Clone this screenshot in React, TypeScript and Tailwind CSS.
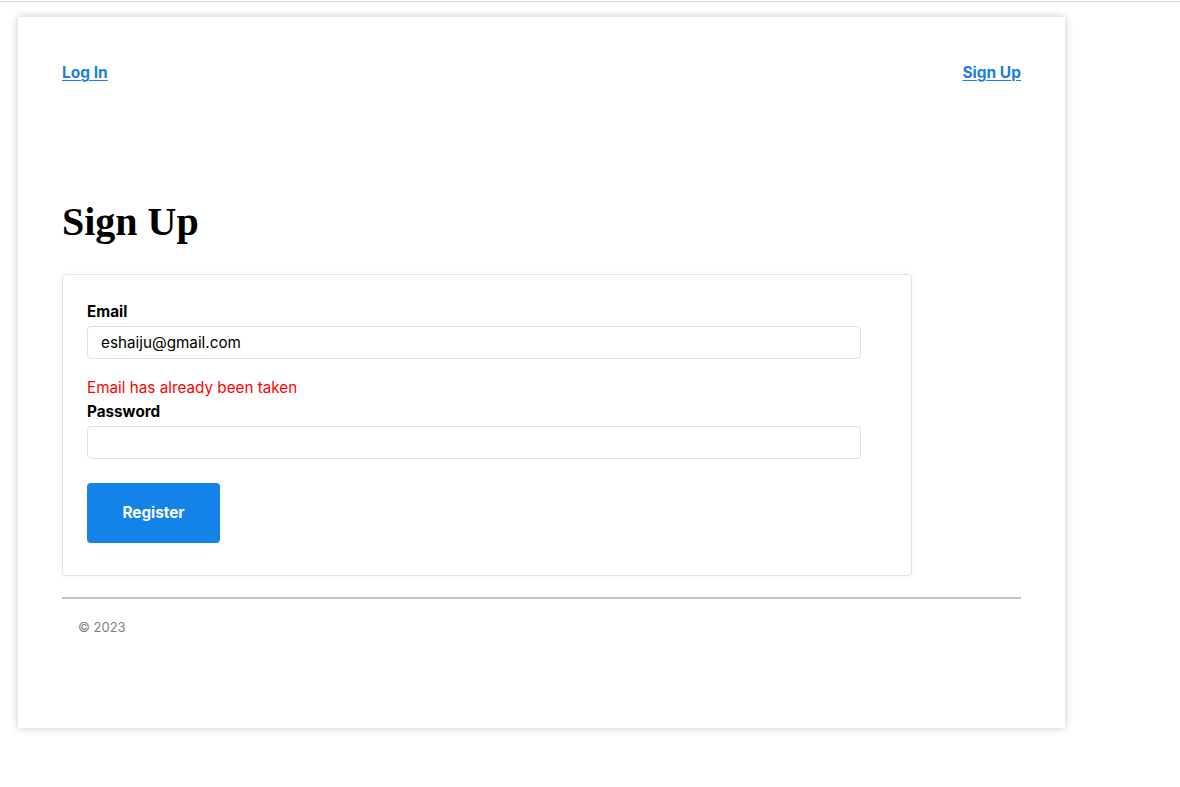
export default function App() {
  return (
    <div className="min-h-screen bg-white font-['Inter','Liberation_Sans',sans-serif] text-black">
      <div className="h-[2px] border-t border-[#d6d6d6] mt-px" />
      <div className="pl-[18px] pt-[14px] pb-[59px]">
        <div className="w-[1047px] h-[711px] bg-white shadow-[0_0_8px_rgba(0,0,0,0.22)] px-11 pt-[44px]">
          {/* nav */}
          <nav className="flex justify-between text-[15.5px] font-bold leading-6 text-[#1a7fe2]">
            <a href="#" className="underline underline-offset-2">Log In</a>
            <a href="#" className="underline underline-offset-2">Sign Up</a>
          </nav>

          <h1 className="mt-[113px] font-['Liberation_Serif',serif] text-[40px] font-bold leading-[48px]">
            Sign Up
          </h1>

          {/* form card */}
          <form className="mt-[28px] w-[850px] rounded border border-[#e3e3e3] shadow-[0_0_6px_rgba(0,0,0,0.05)] px-6 pt-[25px] pb-[32px]">
            <label className="block text-[15.25px] font-bold leading-6">Email</label>
            <input
              type="email"
              defaultValue="eshaiju@gmail.com"
              className="mt-[2px] block w-[774px] h-[33px] rounded border border-[#e0e0e0] px-[13px] text-[15.25px] outline-none"
            />
            <p className="mt-[17px] text-[15.25px] leading-6 text-[#ff0000]">Email has already been taken</p>
            <label className="block text-[15.25px] font-bold leading-6">Password</label>
            <input
              type="password"
              className="mt-[2px] block w-[774px] h-[33px] rounded border border-[#e0e0e0] px-[13px] text-[15.25px] outline-none"
            />
            <button
              type="button"
              className="mt-[24px] w-[133px] h-[60px] rounded bg-[#1383ea] text-white text-[15.25px] font-bold"
            >
              Register
            </button>
          </form>

          <footer className="mt-[21px] border-t-2 border-[#c4c4c4] pt-[18px] pl-4">
            <p className="text-[13px] leading-5 text-[#808080]">© 2023</p>
          </footer>
        </div>
      </div>
    </div>
  );
}
